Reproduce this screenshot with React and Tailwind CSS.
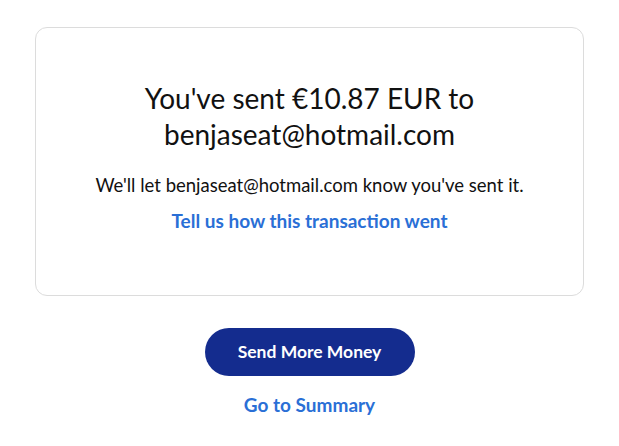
import React from 'react';

const App = () => {
  return (
    <div
      className="min-h-screen bg-white flex flex-col items-center pt-[27px]"
      style={{ fontFamily: 'Lato, "Open Sans", sans-serif' }}
    >
      <div className="w-[549px] h-[269px] border border-[#dcdcdc] rounded-[12px] flex flex-col items-center pt-[52px]">
        <h1 className="text-[28px] leading-[36px] text-[#111] text-center w-[380px]">
          You've sent €10.87 EUR to benjaseat@hotmail.com
        </h1>
        <p className="mt-[21px] text-[18.5px] leading-[24px] text-[#111]">
          We'll let benjaseat@hotmail.com know you've sent it.
        </p>
        <a href="#" className="mt-[12px] text-[19px] leading-[24px] font-bold text-[#2a6fd6]">
          Tell us how this transaction went
        </a>
      </div>

      <button className="mt-[32px] w-[210px] h-[48px] rounded-full bg-[#142c8e] text-white text-[17.5px] font-bold">
        Send More Money
      </button>
      <a href="#" className="mt-[17px] text-[19px] leading-[24px] font-bold text-[#2a6fd6]">
        Go to Summary
      </a>
    </div>
  );
};

export default App;
